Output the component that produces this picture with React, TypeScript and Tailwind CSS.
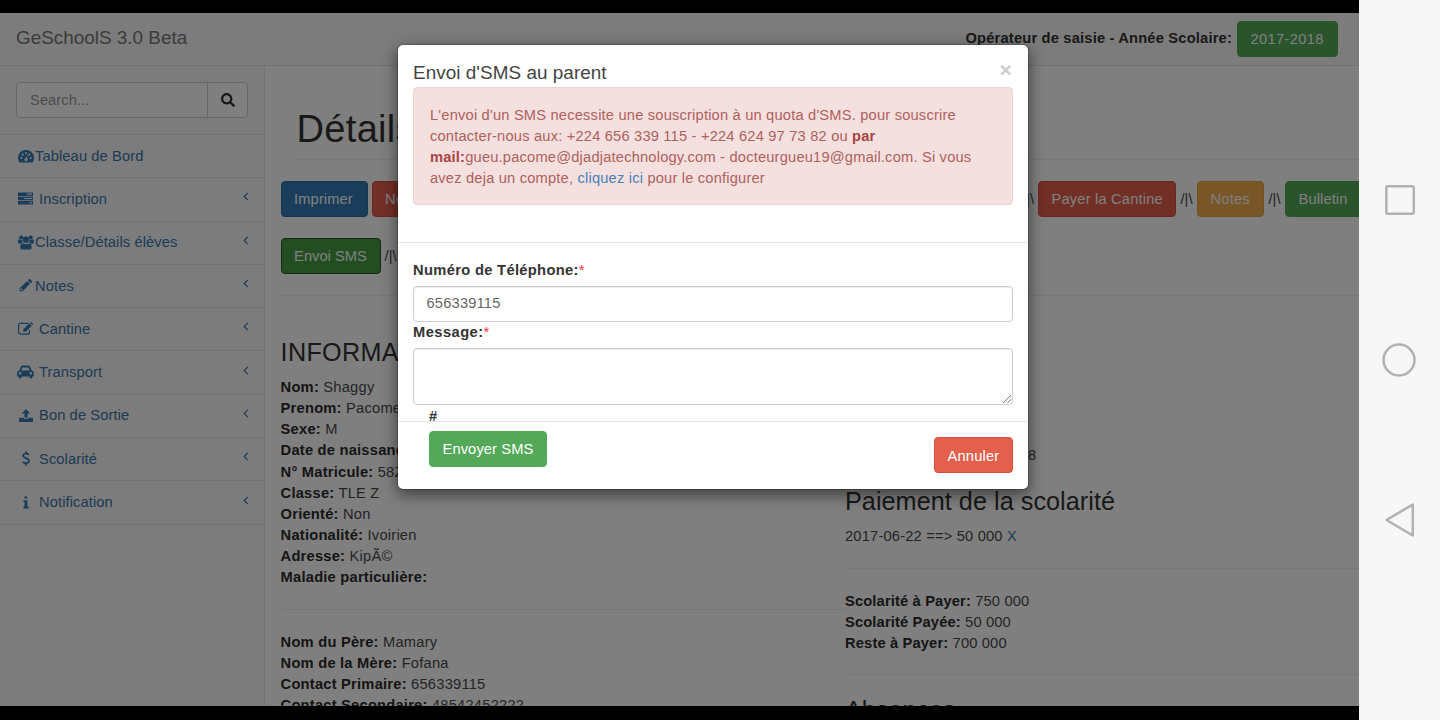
import React from "react";
import { FaSearch } from "react-icons/fa";

const stroke = { fill: "none", stroke: "currentColor" } as const;

function Gauge() {
  return (
    <svg viewBox="0 0 16 14" className="h-[14px] w-[16px]" fill="currentColor">
      <path fillRule="evenodd" d="M8 1a8 8 0 0 0-6.800 12.200c.2.3.4.4.7.4h12.200c.3 0 .6-.1.7-.4A8 8 0 0 0 8 1zM3.300 8a1.050 1.050 0 1 1 0 2.100a1.050 1.050 0 1 1 0-2.100zM4.700 4.600a1.050 1.050 0 1 1 0 2.100a1.050 1.050 0 1 1 0-2.100zM8 3.100a1.050 1.050 0 1 1 0 2.100a1.050 1.050 0 1 1 0-2.100zM11.300 4.600a1.050 1.050 0 1 1 0 2.100a1.050 1.050 0 1 1 0-2.100zM12.700 8a1.050 1.050 0 1 1 0 2.100a1.050 1.050 0 1 1 0-2.100zM8.900 5.700l.8.2-.8 3.200a1.700 1.700 0 1 1-.9-.2z" />
    </svg>
  );
}

function Tasks() {
  return (
    <svg viewBox="0 0 15 13" className="h-[13px] w-[15px]" fill="currentColor">
      <path fillRule="evenodd" d="M0 .5h15v3.400H0zM9 1.600v1.100h5V1.600zM0 4.800h15v3.400H0zM6 5.900V7h8V5.900zM0 9.100h15v3.400H0zM11 10.200v1.100h3v-1.100z" />
    </svg>
  );
}

function Users() {
  return (
    <svg viewBox="0 0 16 15" className="h-[15px] w-[16px]" fill="currentColor">
      <circle cx="3.300" cy="2.500" r="2.100" />
      <circle cx="12.700" cy="2.500" r="2.100" />
      <circle cx="8" cy="4.700" r="3.100" />
      <path d="M0 6.600C0 5.300.4 4.300 1.200 4.300c.7.600 2 .8 3.100.5C4.300 6 4.600 6.800 5.200 7.500c-1 0-1.900.5-2.500 1.200H1.600C.6 8.700 0 8 0 6.600zM16 6.600c0-1.300-.4-2.300-1.200-2.300-.7.600-2 .8-3.100.5 0 1.200-.3 2-.9 2.700 1 0 1.900.5 2.500 1.200h1.100c1 0 1.600-.7 1.600-2.100z" />
      <path d="M2.300 12.400c0-2.400.6-4.200 2.500-4.200 1.800 1.500 4.600 1.500 6.400 0 1.900 0 2.500 1.800 2.500 4.200 0 1.400-.9 2.200-2.200 2.200h-7c-1.300 0-2.200-.8-2.200-2.200z" />
    </svg>
  );
}

function Pencil() {
  return (
    <svg viewBox="0 0 13 13" className="size-[13px]" fill="currentColor">
      <path fillRule="evenodd" d="M8.200 2L11 4.800 3.700 12.200H.7V9.300zM1.700 9.900v1.300h1.400l.6-.6-1.400-1.300zM8.900 1.300l1-1c.4-.4.900-.4 1.300 0l1.600 1.600c.4.400.4.900 0 1.300l-1 1z" />
    </svg>
  );
}

function Edit() {
  return (
    <svg viewBox="0 0 15 13" className="h-[13px] w-[15px]">
      <path {...stroke} strokeWidth="1.200" d="M11.500 8v2.200a2 2 0 0 1-2 2H2.600a2 2 0 0 1-2-2V3.300a2 2 0 0 1 2-2h6.900l.8.200" />
      <path fill="currentColor" d="M5.300 7.200l6-6 2.500 2.500-6 6H5.300zM11.900.6l.5-.4c.4-.3.900-.3 1.200 0l1.100 1.100c.4.400.4.900 0 1.200l-.4.500z" />
    </svg>
  );
}

function Car() {
  return (
    <svg viewBox="0 0 17 14" className="h-[14px] w-[17px] shrink-0" fill="currentColor">
      <path fillRule="evenodd" d="M2.300 5.600L3.500 2.200C3.900 1.100 4.700.5 5.800.5h5.400c1.100 0 1.900.6 2.300 1.700l1.200 3.400c1.300.1 2.100 1 2.100 2.300v3.500h-1.500v.8a1.350 1.350 0 0 1-2.700 0v-.8H4.400v.8a1.350 1.350 0 0 1-2.700 0v-.8H.2V7.900c0-1.300.8-2.200 2.100-2.300zM4.400 5.500h8.200l-.9-2.700c-.1-.3-.3-.4-.6-.4H5.900c-.3 0-.5.100-.6.400zM3.100 7a1.350 1.350 0 1 0 0 2.700a1.350 1.350 0 1 0 0-2.700zM13.900 7a1.350 1.350 0 1 0 0 2.700a1.350 1.350 0 1 0 0-2.700z" />
    </svg>
  );
}

function Upload() {
  return (
    <svg viewBox="0 0 14 13" className="h-[13px] w-[14px]" fill="currentColor">
      <path d="M7 0l4.300 4.400H8.500v4.200h-3V4.400H2.700z" />
      <path d="M0 8.700h4.600c.2.700 1 1.100 1.600 1.100h1.600c.7 0 1.400-.4 1.600-1.100H14v3.500c0 .4-.3.700-.7.700H.7c-.4 0-.7-.3-.7-.7z" />
    </svg>
  );
}

function Dollar() {
  return (
    <svg viewBox="0 0 8 15" className="h-[15px] w-[8px]">
      <path {...stroke} strokeWidth="1.700" d="M7 3.700C5.700 2.500 1.100 2 1.100 4.600c0 3.100 5.900 2 5.900 5.200 0 2.900-4.500 2.700-6.200 1.200M4 .3v2.300M4 12v2.600" />
    </svg>
  );
}

function Info() {
  return (
    <svg viewBox="0 0 6 13" className="h-[13px] w-[6px]" fill="currentColor">
      <path d="M1.500.4h2.800v2.200H1.500zM.4 4.200h4v6.400h1.200v1.800H.4v-1.800h1.100V6H.4z" />
    </svg>
  );
}

const menu: { icon: React.ReactNode; label: string; wide?: boolean; arrow: boolean }[] = [
  { icon: <Gauge />, label: "Tableau de Bord", arrow: false },
  { icon: <Tasks />, label: "Inscription", wide: true, arrow: true },
  { icon: <Users />, label: "Classe/Détails élèves", arrow: true },
  { icon: <Pencil />, label: "Notes", arrow: true },
  { icon: <Edit />, label: "Cantine", wide: true, arrow: true },
  { icon: <Car />, label: "Transport", wide: true, arrow: true },
  { icon: <Upload />, label: "Bon de Sortie", wide: true, arrow: true },
  { icon: <Dollar />, label: "Scolarité", wide: true, arrow: true },
  { icon: <Info />, label: "Notification", wide: true, arrow: true },
];

function Sidebar() {
  return (
    <aside className="w-[265px] shrink-0 border-r border-[#e7e7e7] bg-[#f8f8f8]">
      <div className="flex h-[68px] pt-4 pl-4">
        <div className="flex h-9 w-[192px] items-center rounded-l border border-[#ccc] bg-white px-[13px] tracking-[0.080px] text-[#999]">Search...</div>
        <div className="-ml-px flex h-9 w-[41px] items-center justify-center rounded-r border border-[#ccc] bg-white text-[#333]">
          <FaSearch className="size-[14px]" />
        </div>
      </div>
      <nav className="border-t border-[#e7e7e7] tracking-[0.100px] text-[#3a76ab]">
        {menu.map((m) => (
          <div key={m.label} className="flex h-[43.300px] items-center border-b border-[#e7e7e7] pr-[15px] pb-px pl-[17px]">
            <span className="flex w-[17px] shrink-0 justify-center text-[#337ab7]">{m.icon}</span>
            <span className={m.wide ? "ml-[5px]" : "ml-px"}>{m.label}</span>
            {m.arrow && (
              <svg viewBox="0 0 6 10" className="mt-[-4px] ml-auto h-[9px] w-[6px]">
                <path {...stroke} strokeWidth="1.300" d="M5 1L1 5l4 4" />
              </svg>
            )}
          </div>
        ))}
      </nav>
    </aside>
  );
}

function Btn({ className, children }: { className: string; children: React.ReactNode }) {
  return (
    <span className={"flex h-9 shrink-0 items-center rounded border pl-[12.500px] whitespace-nowrap text-white " + className}>
      {children}
    </span>
  );
}

function Field({ label, value }: { label: string; value?: string }) {
  return (
    <div className="whitespace-nowrap text-[#4a4a4a]">
      <b className="text-[#2b2b2b]">{label}</b> {value}
    </div>
  );
}

function Content() {
  return (
    <main className="min-w-0 flex-1 overflow-hidden pl-[15.600px]">
      <div className="ml-4 h-[94px] border-b border-[#eee] pt-[40px] text-[38px] leading-[46px] tracking-[0.300px] text-[#333]">Détails</div>
      <div className="mt-[21px] flex items-center text-[#4a4a4a]">
        <Btn className="w-[87px] border-[#2e6da4] bg-[#337ab7] tracking-[0.100px]">Imprimer</Btn>
        <Btn className="ml-1 w-[120px] border-[#d9503f] bg-[#e45f4c]">Nouveau</Btn>
        <span className="ml-auto pr-1 tracking-normal">/|\</span>
        <Btn className="w-[138px] border-[#d9503f] bg-[#e45f4c]">Payer la Cantine</Btn>
        <span className="w-[21px] text-center tracking-normal">/|\</span>
        <Btn className="w-[67px] border-[#eea236] bg-[#f0ad4e]">Notes</Btn>
        <span className="w-[21px] text-center tracking-normal">/|\</span>
        <Btn className="-mr-px w-[75px] rounded-r-none border-[#4cae4c] bg-[#53a958] tracking-[0.100px]">Bulletin</Btn>
      </div>
      <div className="mt-[21px] flex h-9 items-center text-[#4a4a4a]">
        <Btn className="w-[100px] border-[#255625] bg-[#449d44] tracking-normal">Envoi SMS</Btn>
        <span className="pl-1 tracking-normal">/|\</span>
      </div>
      <div className="mt-[21px] border-t border-[#eee]" />
      <div className="flex">
        <section className="w-[564.400px] shrink-0 pt-[41px] tracking-[0.220px]">
          <h3 className="text-[25.200px] leading-[30px] tracking-[0.300px]">INFORMATIONS</h3>
          <div className="mt-[10px] leading-[21.150px]">
            <Field label="Nom:" value="Shaggy" />
            <Field label="Prenom:" value="Pacome" />
            <Field label="Sexe:" value="M" />
            <Field label="Date de naissance:" />
            <Field label="N° Matricule:" value="58Z" />
            <Field label="Classe:" value="TLE Z" />
            <Field label="Orienté:" value="Non" />
            <Field label="Nationalité:" value="Ivoirien" />
            <Field label="Adresse:" value="KipÃ©" />
            <Field label="Maladie particulière:" />
          </div>
          <div className="mt-5 mb-[22px] border-t border-[#eee]" />
          <div className="leading-[21.150px]">
            <Field label="Nom du Père:" value="Mamary" />
            <Field label="Nom de la Mère:" value="Fofana" />
            <Field label="Contact Primaire:" value="656339115" />
            <Field label="Contact Secondaire:" value="48542452222" />
          </div>
        </section>
        <section className="min-w-0 flex-1 pt-[149px] text-[#4a4a4a]">
          <div className="pl-[183px] leading-[21px]">8</div>
          <h3 className="mt-[20px] text-[25.200px] leading-[30px] tracking-[0.050px] whitespace-nowrap text-[#333]">Paiement de la scolarité</h3>
          <div className="mt-[10px] leading-[21px]">
            2017-06-22 ==&gt; 50 000 <span className="text-[#337ab7]">X</span>
          </div>
          <div className="mt-[21px] mb-[22px] border-t border-[#eee]" />
          <div className="leading-[21.150px] tracking-[0.150px]">
            <Field label="Scolarité à Payer:" value="750 000" />
            <Field label="Scolarité Payée:" value="50 000" />
            <Field label="Reste à Payer:" value="700 000" />
          </div>
          <div className="mt-[20px] border-t border-[#eee]" />
          <h3 className="mt-[20px] text-[25.200px] leading-[30px] tracking-normal text-[#333]">Absences</h3>
        </section>
      </div>
    </main>
  );
}

function Modal() {
  return (
    <div className="absolute top-[31px] left-[397px] h-[446px] w-[632px] rounded-[6px] border border-black/20 bg-white bg-clip-padding shadow-[0_5px_15px_rgba(0,0,0,0.5)]">
      <div className="flex h-[198px] flex-col border-b border-[#e5e5e5] px-[15px]">
        <div className="flex h-[42px] items-start justify-between pt-[15px]">
          <h4 className="text-[18.900px] leading-[26px] tracking-[0.050px] text-[#444]">Envoi d'SMS au parent</h4>
          <span className="pr-px text-[21px] leading-[20px] font-bold text-[#ccc]">×</span>
        </div>
        <div className="h-[118px] rounded border border-[#efd3d5] bg-[#f4e0df] px-4 pt-[17px] leading-[21.150px] whitespace-nowrap text-[#b0615d]">
          L'envoi d'un SMS necessite une souscription à un quota d'SMS. pour souscrire
          <br />
          contacter-nous aux: +224 656 339 115 - +224 624 97 73 82 ou <b className="text-[#a94442]">par</b>
          <br />
          <b className="text-[#a94442]">mail:</b>gueu.pacome@djadjatechnology.com - docteurgueu19@gmail.com. Si vous
          <br />
          avez deja un compte, <span className="text-[#4a80ba]">cliquez ici</span> pour le configurer
        </div>
      </div>
      <div className="h-[179px] border-b border-[#e5e5e5] px-[15px] pt-[17px]">
        <div className="h-[26px] leading-[21px]">
          <b className="tracking-[0.330px]">Numéro de Téléphone:</b>
          <span className="text-[#f33]">*</span>
        </div>
        <div className="flex h-9 items-center rounded border border-[#ccc] px-[12.500px] pb-px text-[#666] shadow-[inset_0_1px_1px_rgba(0,0,0,0.075)]">656339115</div>
        <div className="h-[26px] leading-[21px]">
          <b className="tracking-[0.450px]">Message:</b>
          <span className="text-[#f33]">*</span>
        </div>
        <div className="flex h-[57px] items-end justify-end rounded border border-[#ccc] shadow-[inset_0_1px_1px_rgba(0,0,0,0.075)]">
          <svg viewBox="0 0 10 10" className="size-[10px] text-[#777]">
            <path {...stroke} strokeWidth="1" d="M1 9l8-8M5.500 9L9 5.500" />
          </svg>
        </div>
        <div className="pl-4 leading-[22px] font-bold">#</div>
      </div>
      <div className="flex justify-between pr-[15px] pl-[31px]">
        <Btn className="mt-[9px] w-[118px] border-[#4cae4c] bg-[#53a958] tracking-[0.100px]">Envoyer SMS</Btn>
        <Btn className="mt-[15px] w-[79px] border-[#d9503f] bg-[#e45f4c] pt-[2px]">Annuler</Btn>
      </div>
    </div>
  );
}

export default function App() {
  return (
    <div className="flex h-[720px] w-[1440px] overflow-hidden bg-black font-['Liberation_Sans',Arial,sans-serif] text-[14.700px] tracking-[0.180px] text-[#333]">
      <div className="relative mt-[13px] flex h-[693px] w-[1359px] flex-col overflow-hidden bg-white">
        <header className="flex h-[53px] shrink-0 items-center border-b border-[#e7e7e7] bg-[#f8f8f8] pr-[21px] pl-4">
          <span className="pb-px text-[18.900px] tracking-normal text-[#777]">GeSchoolS 3.0 Beta</span>
          <b className="mr-[5px] ml-auto pb-px">Opérateur de saisie - Année Scolaire:</b>
          <Btn className="w-[101px] border-[#4cae4c] bg-[#53a958] pt-px tracking-[0.350px]">2017-2018</Btn>
        </header>
        <div className="flex min-h-0 flex-1">
          <Sidebar />
          <Content />
        </div>
        <div className="absolute inset-0 bg-black/50" />
        <Modal />
      </div>
      <div className="flex w-[81px] flex-col items-center bg-[#f7f7f7] text-[#b2b2b2]">
        <svg viewBox="0 0 81 720" className="h-[720px] w-[81px]">
          <g {...stroke} strokeWidth="2.500" strokeLinejoin="round">
            <rect x="27.300" y="186.300" width="27.500" height="27.500" rx="1" />
            <circle cx="40" cy="360" r="15.500" />
            <path d="M53.800 504.500v31L27.500 520z" />
          </g>
        </svg>
      </div>
    </div>
  );
}
